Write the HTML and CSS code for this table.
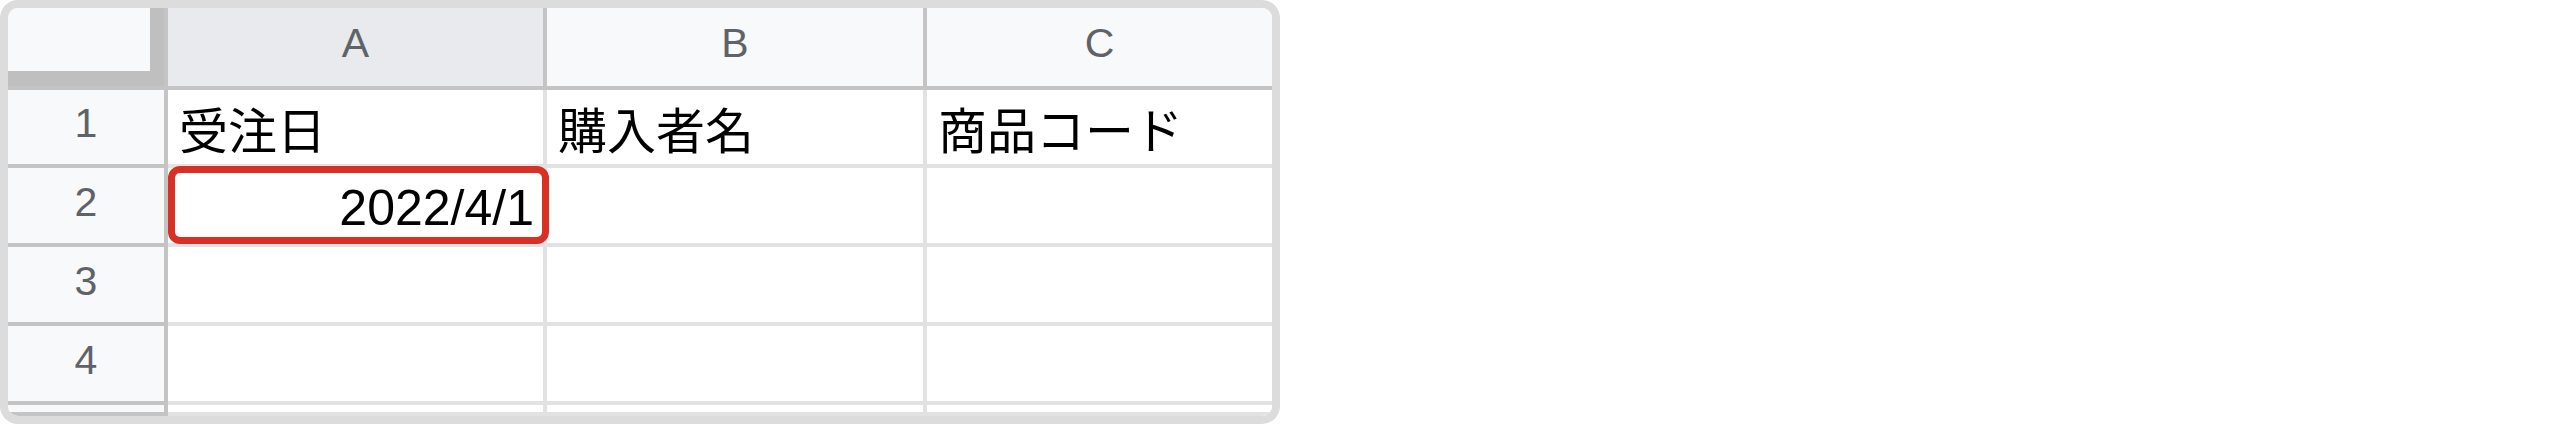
FILE: index.html
```html
<!DOCTYPE html>
<html lang="ja">
<head>
<meta charset="utf-8">
<title>Sheet</title>
<link rel="stylesheet" href="styles.css">
</head>
<body>
<div class="frame">
  <div class="sheet">
    <div class="corner"></div>
    <div class="colhead active">A</div>
    <div class="colhead">B</div>
    <div class="colhead last">C</div>

    <div class="rowhead">1</div>
    <div class="cell">受注日</div>
    <div class="cell">購入者名</div>
    <div class="cell last">商品コード</div>

    <div class="rowhead">2</div>
    <div class="cell num"><span class="ring"></span>2022/4/1</div>
    <div class="cell"></div>
    <div class="cell last"></div>

    <div class="rowhead">3</div>
    <div class="cell"></div>
    <div class="cell"></div>
    <div class="cell last"></div>

    <div class="rowhead">4</div>
    <div class="cell"></div>
    <div class="cell"></div>
    <div class="cell last"></div>

    <div class="rowhead"></div>
    <div class="cell"></div>
    <div class="cell"></div>
    <div class="cell last"></div>
  </div>
</div>
</body>
</html>
```

FILE: styles.css
```css
html, body {
  margin: 0;
  padding: 0;
  background: #ffffff;
}

.frame {
  width: 1280px;
  height: 424px;
  box-sizing: border-box;
  border: 8px solid #dcdcdc;
  border-radius: 18px;
  overflow: hidden;
  background: #ffffff;
}

.sheet {
  display: grid;
  grid-template-columns: 160px 379px 380px 345px;
  grid-template-rows: 82px 78px 79px 79px 79px 11px;
}

.sheet > div {
  box-sizing: border-box;
}

.corner {
  background: #f8f9fa;
  border-right: 4px solid #c4c4c4;
  border-bottom: 4px solid #c4c4c4;
  box-shadow: inset -14px -15px 0 #bfbfbf;
}

.colhead {
  display: flex;
  align-items: center;
  justify-content: center;
  padding-bottom: 8px;
  background: #f8f9fa;
  border-right: 4px solid #c4c4c4;
  border-bottom: 4px solid #c4c4c4;
  font-family: "Liberation Sans", Arial, sans-serif;
  font-size: 41px;
  color: #5f6368;
}

.colhead.active {
  background: #e8eaed;
}

.colhead.last {
  border-right: none;
}

.rowhead {
  display: flex;
  align-items: center;
  justify-content: center;
  padding-bottom: 7px;
  background: #f8f9fa;
  border-right: 4px solid #c4c4c4;
  border-bottom: 4px solid #c4c4c4;
  font-family: "Liberation Sans", Arial, sans-serif;
  font-size: 41px;
  color: #5f6368;
}

.cell {
  position: relative;
  display: flex;
  align-items: center;
  padding: 0 11px;
  background: #ffffff;
  border-right: 4px solid #e2e2e2;
  border-bottom: 4px solid #e2e2e2;
  font-family: "Liberation Sans", "Noto Sans CJK JP", sans-serif;
  font-size: 49px;
  color: #000000;
  white-space: nowrap;
}

.cell.last {
  border-right: none;
}

.cell.num {
  z-index: 1;
  justify-content: flex-end;
  padding: 4px 9px 0 9px;
  font-size: 50px;
}

.ring {
  position: absolute;
  left: 0;
  top: -2px;
  right: -6px;
  bottom: -1px;
  border: 7px solid #d93025;
  border-radius: 12px;
  pointer-events: none;
}
```
